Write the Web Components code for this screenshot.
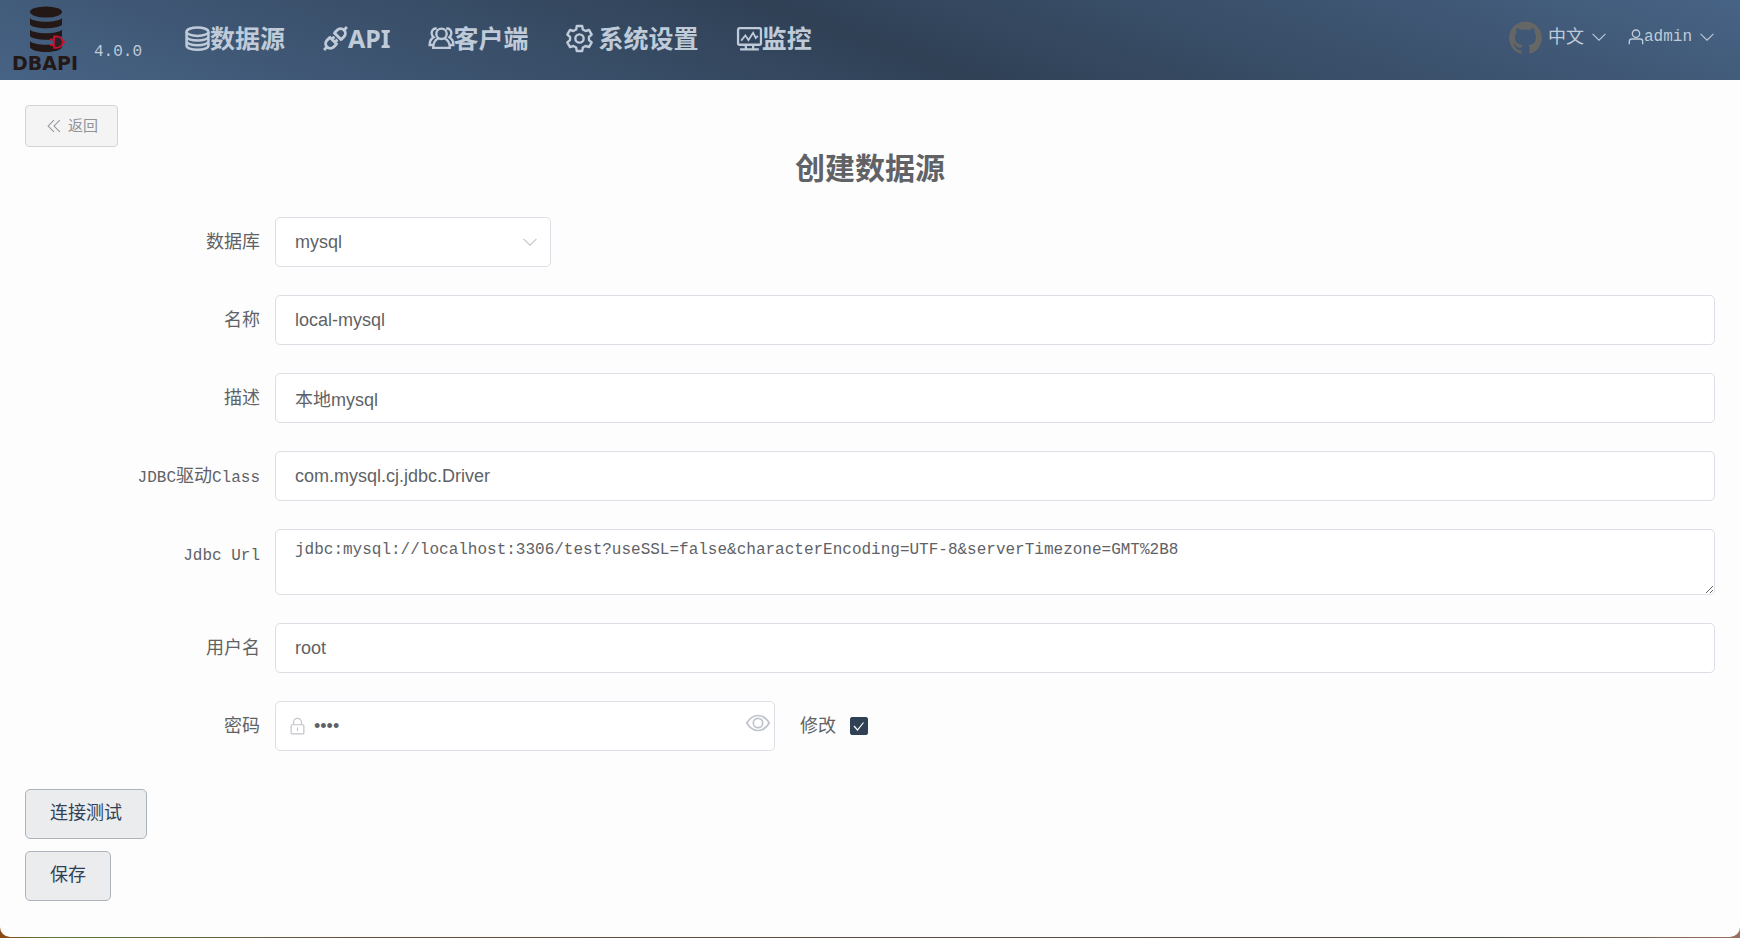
<!DOCTYPE html>
<html lang="zh-CN">
<head>
<meta charset="utf-8">
<title>DBAPI - 创建数据源</title>
<meta name="viewport" content="width=device-width, initial-scale=1">
<style>
  html { background: linear-gradient(90deg, #8a4a14, #5d7a3c 3%, #6a5040 20%, #5c4a3e 60%, #4a4a38 85%, #9a7060); }
  body { margin: 0; font: 18px/26px "Liberation Sans", "Noto Sans CJK SC", sans-serif; color: #606266; }
</style>
</head>
<body>
<db-app></db-app>
<script>
const MONO = '"Liberation Mono", "Noto Sans CJK SC", monospace';

const ICONS = {
  database: '<g stroke-width="2.400"><ellipse cx="12" cy="5.500" rx="10.500" ry="4"/><path d="M1.500 5.500V19c0 2 4.500 3.800 10.500 3.800s10.500-1.800 10.500-3.800V5.500M1.500 10c0 2.200 4.500 4 10.500 4s10.500-1.800 10.500-4M1.500 14.500c0 2.200 4.500 4 10.500 4s10.500-1.800 10.500-4"/></g>',
  api: '<g transform="rotate(-45 12 12)" stroke-width="2.800"><path d="M-3.500 12H0M9 6.500v11M9 7.500H5a4.500 4.500 0 0 0 0 9h4M9 10h3.500M9 14h3.500M15 6.500v11M15 7.500h4a4.500 4.500 0 0 1 0 9h-4M24 12h3.500"/></g>',
  users: '<g stroke-width="2.300"><circle cx="12" cy="7.500" r="5"/><path d="M9 12C5.500 13.500 4 16.500 4 21h16c0-4.500-1.500-7.500-5-9M7.500 2.500C4.500 2 2.500 4.200 2.500 6.800c0 1.800.700 3 1.900 4C2 12.200.600 14.800.600 18.300h3.600M16.500 2.500c3-.500 5 1.700 5 4.300 0 1.800-.700 3-1.900 4 2.400 1.400 3.800 4 3.800 7.500h-3.600"/></g>',
  gear: '<g stroke-width="2.300" stroke-linejoin="round"><circle cx="12" cy="12" r="4"/><path d="M9.400 0h5.200l.6 3.300 2.700 1.500 3.200-1.100 2.600 4.500L21.100 10.500v3l2.600 2.300-2.600 4.500-3.200-1.100-2.700 1.500-.6 3.300H9.400l-.6-3.300-2.700-1.500-3.200 1.100-2.600-4.500 2.600-2.300v-3L.3 8.200l2.600-4.500 3.200 1.100 2.700-1.500z"/></g>',
  monitor: '<g stroke-width="2.200"><rect x="1" y="2" width="22" height="16" rx="1.500"/><path d="M8.500 18v4M15.500 18v4M3 22.500h18"/><path stroke-width="1.700" d="M4 14l4-5 3 4.500 4.500-7 2.500 5 2-2"/></g>',
  back: '<path stroke-width="1.800" d="M12 2L2 12l10 10M22 2L12 12l10 10"/>',
  down: '<path stroke-width="1.800" d="M1 6.500l11 11 11-11"/>',
  user: '<g stroke-width="2"><circle cx="12" cy="7" r="5.500"/><path d="M2 23v-4.500c0-2.200 1.500-3.500 3.500-3.500h13c2 0 3.500 1.300 3.500 3.500V23"/></g>',
  lock: '<g stroke-width="1.700"><rect x="3" y="9.500" width="18" height="13" rx="1.500"/><path d="M6.500 9.500V6a5.500 5.500 0 0 1 11 0v3.500M12 13.500v5"/></g>',
  eye: '<g stroke-width="1.700"><path d="M.800 12c3-5 6.600-7.500 11.200-7.500S20.200 7 23.200 12c-3 5-6.600 7.500-11.200 7.500S3.800 17 .800 12z"/><circle cx="12" cy="12" r="4.700"/></g>',
  github: '<path fill="currentColor" stroke="none" d="M12 .300a12 12 0 0 0-3.800 23.380c.6.120.830-.260.830-.570L9 21.070c-3.340.720-4.040-1.610-4.040-1.610-.550-1.390-1.340-1.760-1.340-1.760-1.080-.740.090-.730.090-.730 1.200.090 1.840 1.240 1.840 1.240 1.070 1.830 2.810 1.300 3.500 1 .100-.780.420-1.310.760-1.610-2.670-.300-5.470-1.330-5.470-5.930 0-1.310.470-2.380 1.240-3.220-.140-.300-.540-1.520.100-3.180 0 0 1.010-.320 3.300 1.230a11.500 11.500 0 0 1 6 0c2.280-1.550 3.290-1.230 3.290-1.230.640 1.660.240 2.880.120 3.180a4.650 4.650 0 0 1 1.230 3.220c0 4.610-2.800 5.630-5.480 5.920.420.360.810 1.100.810 2.220l-.010 3.290c0 .310.200.690.820.570A12 12 0 0 0 12 .300"/>'
};

function define(name, html, setup) {
  customElements.define(name, class extends HTMLElement {
    constructor() {
      super();
      this.attachShadow({ mode: 'open' });
    }
    connectedCallback() {
      this.shadowRoot.innerHTML = typeof html === 'function' ? html(this) : html;
      if (setup) setup(this, this.shadowRoot);
    }
  });
}

define('db-icon', el => `
  <style>
    :host { display: inline-block; flex: none; width: 24px; height: 24px; }
    svg { display: block; width: 100%; height: 100%; overflow: visible; }
  </style>
  <svg viewBox="0 0 24 24" fill="none" stroke="currentColor" aria-hidden="true">${ICONS[el.getAttribute('name')]}</svg>`);

define('db-logo', `
  <style>
    :host { display: flex; flex-direction: column; align-items: center; width: 66px; color: #231815; }
    svg { display: block; width: 40px; height: 48px; }
    span { font: bold 19px/18px "DejaVu Sans", sans-serif; }
  </style>
  <svg viewBox="-3 0 40 48" aria-hidden="true">
    <g fill="#231815">
      <ellipse cx="18" cy="6" rx="16" ry="5.500"/>
      <path d="M2 12c4 5 28 5 32 0v6.500c-4 5-28 5-32 0zM2 23.500c4 5 28 5 32 0V30c-4 5-28 5-32 0zM2 35c4 5 28 5 32 0v6.500c-4 6-28 6-32 0z"/>
    </g>
    <path d="M26 31h3a5.500 5.500 0 0 1 0 11h-3z" fill="#2c2029"/>
    <path d="M26 30.500h3a5.700 5.700 0 0 1 0 11.400h-3zM22 33.500h4M22 39h4M35 36.200h3" fill="none" stroke="#c1122f" stroke-width="1.800"/>
  </svg>
  <span>DBAPI</span>`);

define('db-nav-item', el => `
  <style>
    :host { display: block; }
    a { display: flex; align-items: center; gap: ${el.hasAttribute('spaced') ? 7 : 0}px; color: #bfcbd9; text-decoration: none;
        font: bold 25px/36px "Noto Sans", "Noto Sans CJK SC", sans-serif; }
    db-icon { width: 25px; height: 25px; }
  </style>
  <a href="#${el.getAttribute('icon')}"><db-icon name="${el.getAttribute('icon')}"></db-icon><span><slot></slot></span></a>`);

define('db-menu-button', `
  <style>
    :host { display: block; }
    button { display: flex; align-items: center; border: 0; padding: 0; background: none; color: #bfcbd9; cursor: pointer;
             font: inherit; }
    db-icon { width: 14px; height: 14px; margin-left: 8px; }
  </style>
  <button type="button"><slot></slot><db-icon name="down"></db-icon></button>`);

define('db-header', `
  <style>
    :host { display: flex; align-items: center; box-sizing: border-box; height: 80px; padding: 0 26px 4px 12px;
            background: linear-gradient(20deg, #476385, #304156 50%, #476385); color: #bfcbd9; }
    db-logo { margin-top: 2px; }
    .version { align-self: flex-end; margin-left: 16px; padding-bottom: 11px; font: 16px/26px ${MONO}; }
    nav { display: flex; gap: 38px; margin-left: 43px; }
    .right { display: flex; align-items: center; margin-left: auto; padding-bottom: 2px; }
    .github { display: block; height: 33px; margin-right: 6px; color: #666; }
    .github db-icon { width: 33px; height: 33px; }
    .user { margin-left: 22px; font: 16px/26px ${MONO}; }
    .user db-icon { width: 16px; height: 16px; }
  </style>
  <db-logo></db-logo>
  <span class="version">4.0.0</span>
  <nav>
    <db-nav-item icon="database">数据源</db-nav-item>
    <db-nav-item icon="api">API</db-nav-item>
    <db-nav-item icon="users">客户端</db-nav-item>
    <db-nav-item icon="gear" spaced>系统设置</db-nav-item>
    <db-nav-item icon="monitor">监控</db-nav-item>
  </nav>
  <div class="right">
    <a class="github" href="#github" aria-label="GitHub"><db-icon name="github"></db-icon></a>
    <db-menu-button>中文</db-menu-button>
    <db-menu-button class="user"><db-icon name="user"></db-icon>admin</db-menu-button>
  </div>`);

define('db-button', el => `
  <style>
    :host { display: block; }
    button { display: flex; align-items: center; justify-content: center; box-sizing: border-box; cursor: pointer;
             height: 50px; padding: 0 24px 2px; border: 1px solid #acb3bb; border-radius: 5px;
             background: #eaecee; color: #304156; font: 18px/26px "Liberation Sans", "Noto Sans CJK SC", sans-serif; }
    :host([small]) button { height: 42px; gap: 7px; padding: 0 19px 0 21px; border-color: #d3d4d6; border-radius: 4px;
             background: #f4f4f5; color: #909399; font-size: 15px; }
    ::slotted(db-icon) { width: 14px; height: 14px; }
  </style>
  <button type="button"><slot></slot></button>`);

/* One labelled row of the form: the kind attribute picks the control. */
const CONTROLS = {
  text: v => `<input id="control" type="text" value="${v}">`,
  select: v => `<div class="select"><select id="control"><option>${v}</option></select><db-icon name="down"></db-icon></div>`,
  textarea: v => `<textarea id="control" spellcheck="false">${v.replace(/&/g, '&amp;')}</textarea>`,
  password: v => `<div class="password"><db-icon name="lock"></db-icon><input id="control" type="password" value="${v}">
    <button type="button" aria-label="显示密码"><db-icon name="eye"></db-icon></button></div>`
};

define('db-field', el => `
  <style>
    :host { display: flex; align-items: flex-start; }
    .label { flex: none; box-sizing: border-box; width: 250px; padding-right: 15px; text-align: right; font-size: 18px; line-height: 50px; }
    .control { flex: 1; min-width: 0; display: flex; align-items: center; }
    input, select, textarea { display: block; box-sizing: border-box; width: 100%; height: 50px; margin: 0; padding: 0 19px;
      border: 1px solid #dcdfe6; border-radius: 5px; background: #fff; color: #606266; outline: none; appearance: none;
      font: 18px/48px "Liberation Sans", "Noto Sans CJK SC", sans-serif; }
    textarea { height: 66px; padding: 7px 19px; font: 16px/26px ${MONO}; resize: vertical; }
    .select { position: relative; width: 276px; }
    .select db-icon { position: absolute; right: 14px; top: 18px; width: 14px; height: 14px; color: #c0c4cc; pointer-events: none; }
    .password { display: flex; align-items: center; box-sizing: border-box; width: 500px; height: 50px; padding: 0 4px 0 13px;
      border: 1px solid #dcdfe6; border-radius: 5px; background: #fff; color: #c0c4cc; }
    .password input { flex: 1; width: auto; height: 48px; padding: 0 8px; border: 0; }
    .password db-icon[name=lock] { width: 17px; height: 17px; }
    .password button { padding: 0 0 6px; border: 0; background: none; color: inherit; }
    .password button db-icon { display: block; }
  </style>
  <label class="label" for="control"><slot name="label"></slot></label>
  <div class="control">${CONTROLS[el.getAttribute('kind')](el.getAttribute('value').replace(/"/g, '&quot;'))}<slot></slot></div>`);

define('db-check', `
  <style>
    :host { display: block; margin-left: 25px; }
    label { display: flex; align-items: center; gap: 14px; line-height: 48px; }
    input { appearance: none; box-sizing: border-box; width: 18px; height: 18px; margin: 0; border: 1px solid #304156; border-radius: 2px; background: #fff; }
    .box { display: grid; }
    .box > * { grid-area: 1 / 1; }
    input:checked { background: #304156; }
    svg { width: 18px; height: 18px; pointer-events: none; }
  </style>
  <label><slot></slot><span class="box"><input type="checkbox" checked>
    <svg viewBox="0 0 18 18" fill="none" stroke="#fff" stroke-width="1.200" aria-hidden="true"><path d="M4 9l3.500 4L13.500 5.500"/></svg></span></label>`);

define('db-app', `
  <style>
    :host { display: block; min-height: calc(100vh - 1px); border-radius: 0 0 10px 10px; background: #fdfdfd; }
    main { padding: 25px 25px 34px; }
    .back { display: flex; }
    h1 { margin: 0 0 32px; text-align: center; font: bold 30px/38px "Noto Sans CJK SC", sans-serif; }
    form { display: flex; flex-direction: column; gap: 28px; }
    .latin { font: 16px/26px ${MONO}; }
    .actions { display: flex; flex-direction: column; align-items: flex-start; gap: 12px; margin-top: 38px; }
  </style>
  <db-header></db-header>
  <main>
    <div class="back"><db-button small><db-icon name="back"></db-icon>返回</db-button></div>
    <h1>创建数据源</h1>
    <form>
      <db-field kind="select" value="mysql"><span slot="label">数据库</span></db-field>
      <db-field kind="text" value="local-mysql"><span slot="label">名称</span></db-field>
      <db-field kind="text" value="本地mysql"><span slot="label">描述</span></db-field>
      <db-field kind="text" value="com.mysql.cj.jdbc.Driver"><span slot="label"><span class="latin">JDBC</span>驱动<span class="latin">Class</span></span></db-field>
      <db-field kind="textarea" value="jdbc:mysql://localhost:3306/test?useSSL=false&amp;characterEncoding=UTF-8&amp;serverTimezone=GMT%2B8"><span slot="label" class="latin">Jdbc Url</span></db-field>
      <db-field kind="text" value="root"><span slot="label">用户名</span></db-field>
      <db-field kind="password" value="root"><span slot="label">密码</span><db-check>修改</db-check></db-field>
    </form>
    <div class="actions">
      <db-button>连接测试</db-button>
      <db-button>保存</db-button>
    </div>
  </main>`);
</script>
</body>
</html>
